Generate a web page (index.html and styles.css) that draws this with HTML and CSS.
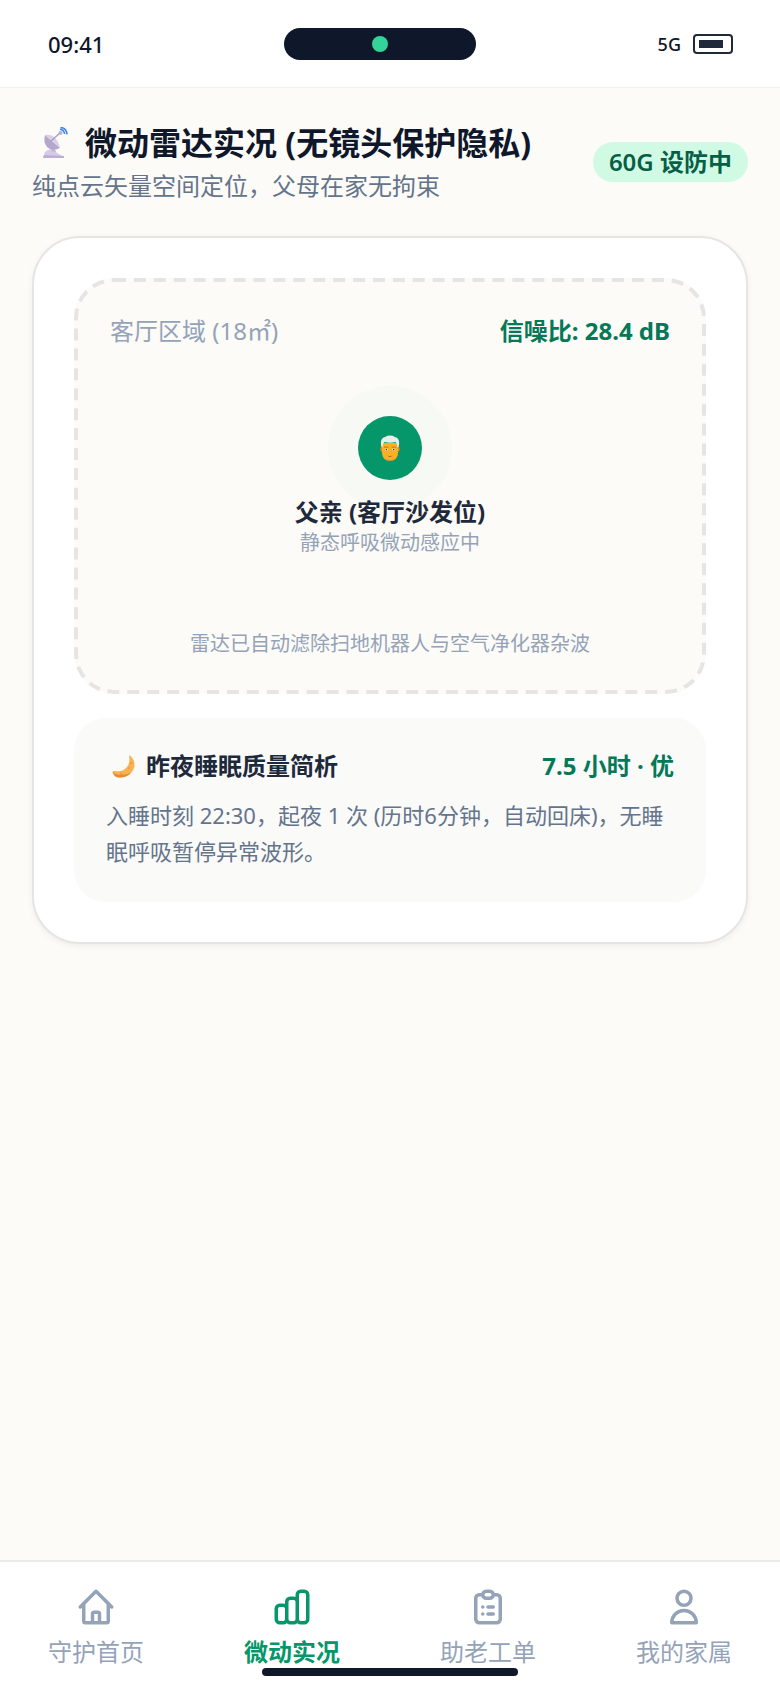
FILE: index.html
```html
<!DOCTYPE html>
<html lang="zh-CN">
<head>
  <meta charset="UTF-8">
  <meta name="viewport" content="width=device-width, initial-scale=1">
  <title>微动实况</title>
  <link rel="stylesheet" href="styles.css">
</head>
<body>
  <div class="app">

    <div class="status-bar">
      <span class="time">09:41</span>
      <div class="island"><span class="island-dot"></span></div>
      <div class="status-right">
        <span class="network">5G</span>
        <div class="battery"><span class="battery-fill"></span></div>
      </div>
    </div>

    <main class="content">
      <div class="page-head">
        <div class="head-text">
          <h1 class="page-title">
            <svg class="emoji-dish" viewBox="0 0 28 32">
              <path d="M3 31 L5 25 Q10 20 14 24 L24 30 Q25 31 23 31 Z" fill="#d6cbe6"/>
              <path d="M3 31 L4 28 L24 29 L24 31 Z" fill="#bdaed3"/>
              <path d="M10 20 L12 25 L16 25 L14 19 Z" fill="#c6b9da"/>
              <path d="M5 8 L20 21 Q12 25 7 20 Q3 15 5 8 Z" fill="#b5a6cc"/>
              <path d="M5 8 Q11 7 15 11 Q19 15 20 21 Z" fill="#d9cfe8"/>
              <path d="M11 14 L20 6" stroke="#a79ac0" stroke-width="1.4"/>
              <circle cx="20.5" cy="6" r="2" fill="#b8b3c6"/>
              <path d="M20 2.2 Q24 2.6 24.6 7 M20.5 0.4 Q26.5 0.8 27 7.4" fill="none" stroke="#3f83f0" stroke-width="1.5"/>
            </svg>
            <span>微动雷达实况 (无镜头保护隐私)</span>
          </h1>
          <p class="page-sub">纯点云矢量空间定位，父母在家无拘束</p>
        </div>
        <span class="badge">60G 设防中</span>
      </div>

      <section class="card">
        <div class="radar">
          <div class="radar-top">
            <span class="room">客厅区域 (18㎡)</span>
            <span class="snr">信噪比: 28.4 dB</span>
          </div>
          <div class="person">
            <div class="avatar">
              <svg class="emoji-man" viewBox="0 0 20 26">
                <rect x="0.3" y="11.5" width="19.4" height="5.5" rx="2.4" fill="#e8862a"/>
                <path d="M2 8 L18 8 L18 18 Q17.6 25.8 10 25.8 Q2.4 25.8 2 18 Z" fill="#fbb022"/>
                <path d="M5.5 23.5 Q10 26.4 14.5 23.5 L13 25.6 L7 25.6 Z" fill="#f0913c"/>
                <path d="M1.4 12 Q-0.6 3.5 5 2 Q10 -0.8 15 2 Q20.6 3.5 18.6 12 L17.4 12 Q17.6 8.5 15.4 7 Q10 8.6 4.6 7 Q2.4 8.5 2.6 12 Z" fill="#ececea"/>
                <rect x="4" y="11.6" width="4.4" height="1.1" fill="#d07a20"/>
                <rect x="11.6" y="11.6" width="4.4" height="1.1" fill="#d07a20"/>
                <ellipse cx="6.3" cy="14.6" rx="1.6" ry="1.1" fill="#fff"/>
                <ellipse cx="13.7" cy="14.6" rx="1.6" ry="1.1" fill="#fff"/>
                <circle cx="6.3" cy="14.6" r="0.8" fill="#3a2a20"/>
                <circle cx="13.7" cy="14.6" r="0.8" fill="#3a2a20"/>
                <path d="M7.4 20.6 Q10 21.6 12.6 20.6 Q10 23 7.4 20.6 Z" fill="#c2303a"/>
              </svg>
            </div>
            <strong class="person-name">父亲 (客厅沙发位)</strong>
            <span class="person-state">静态呼吸微动感应中</span>
          </div>
          <p class="radar-note">雷达已自动滤除扫地机器人与空气净化器杂波</p>
        </div>

        <div class="sleep">
          <div class="sleep-top">
            <div class="sleep-title">
              <svg class="emoji-moon" viewBox="0 0 24 23">
                <path d="M18 0.5 Q24 6 22 13 Q19 22 8 22.6 Q2 22.6 0.5 17 Q1 15.6 3 16 Q11 17.4 15 12 Q18.5 7.5 17 1.2 Q17.2 0.2 18 0.5 Z" fill="#f9b24f"/>
                <path d="M0.5 17 Q2 22.6 8 22.6 Q15 22.2 19 18 Q12 20.5 6 19.5 Q2.5 19 0.5 17 Z" fill="#e98a37"/>
                <circle cx="19" cy="8" r="1" fill="#e9963f"/>
                <circle cx="9" cy="19" r="1.1" fill="#e9963f"/>
                <circle cx="17" cy="13" r="0.8" fill="#e9963f"/>
              </svg>
              <strong>昨夜睡眠质量简析</strong>
            </div>
            <span class="sleep-score">7.5 小时 · 优</span>
          </div>
          <p class="sleep-desc">入睡时刻 22:30，起夜 1 次 (历时6分钟，自动回床)，无睡眠呼吸暂停异常波形。</p>
        </div>
      </section>
    </main>

    <nav class="tabbar">
      <a class="tab">
        <svg class="tab-icon" viewBox="0 0 24 24"><path d="M3 12l2-2m0 0l7-7 7 7M5 10v10a1 1 0 001 1h3m10-11l2 2m-2-2v10a1 1 0 01-1 1h-3m-6 0a1 1 0 001-1v-4a1 1 0 011-1h2a1 1 0 011 1v4a1 1 0 001 1m-6 0h6"/></svg>
        <span>守护首页</span>
      </a>
      <a class="tab active">
        <svg class="tab-icon" viewBox="0 0 24 24"><path d="M9 19v-6a2 2 0 00-2-2H5a2 2 0 00-2 2v6a2 2 0 002 2h2a2 2 0 002-2zm0 0V9a2 2 0 012-2h2a2 2 0 012 2v10m-6 0a2 2 0 002 2h2a2 2 0 002-2m0 0V5a2 2 0 012-2h2a2 2 0 012 2v14a2 2 0 01-2 2h-2a2 2 0 01-2-2z"/></svg>
        <span>微动实况</span>
      </a>
      <a class="tab">
        <svg class="tab-icon" viewBox="0 0 24 24"><path d="M9 5H7a2 2 0 00-2 2v12a2 2 0 002 2h10a2 2 0 002-2V7a2 2 0 00-2-2h-2M9 5a2 2 0 002 2h2a2 2 0 002-2M9 5a2 2 0 012-2h2a2 2 0 012 2m-3 7h3m-3 4h3m-6-4h.01M9 16h.01"/></svg>
        <span>助老工单</span>
      </a>
      <a class="tab">
        <svg class="tab-icon" viewBox="0 0 24 24"><path d="M16 7a4 4 0 11-8 0 4 4 0 018 0zM12 14a7 7 0 00-7 7h14a7 7 0 00-7-7z"/></svg>
        <span>我的家属</span>
      </a>
      <span class="home-bar"></span>
    </nav>

  </div>
</body>
</html>
```

FILE: styles.css
```css
* {
  box-sizing: border-box;
}

body {
  margin: 0;
  background-color: #fcfbf7;
  font-family: "Noto Sans", "Noto Sans CJK SC", sans-serif;
  color: #0f172a;
}

.app {
  display: flex;
  flex-direction: column;
  height: 1688px;
}

/* status bar */
.status-bar {
  display: flex;
  align-items: center;
  justify-content: space-between;
  height: 88px;
  padding: 0 47px 0 48px;
  background-color: #fff;
  border-bottom: 1px solid #f1f1ef;
  position: relative;
}

.time {
  font-size: 22px;
  font-weight: 500;
  line-height: 30px;
}

.island {
  position: absolute;
  left: 284px;
  top: 28px;
  display: flex;
  align-items: center;
  justify-content: center;
  width: 192px;
  height: 32px;
  border-radius: 16px;
  background-color: #0f172a;
}

.island-dot {
  width: 16px;
  height: 16px;
  border-radius: 50%;
  background-color: #34d399;
}

.status-right {
  display: flex;
  align-items: center;
  gap: 12px;
}

.network {
  font-size: 18px;
  font-weight: 500;
  line-height: 24px;
}

.battery {
  width: 40px;
  height: 20px;
  padding: 4px;
  border: 2px solid #1e293b;
  border-radius: 4px;
}

.battery-fill {
  display: block;
  width: 24px;
  height: 8px;
  background-color: #1e293b;
}

/* page */
.content {
  flex: 1;
  padding: 33px 32px 0;
}

.page-head {
  display: flex;
  align-items: center;
  justify-content: space-between;
}

.page-title {
  display: flex;
  align-items: center;
  gap: 17px;
  margin: 0 0 3px;
  padding-left: 8px;
  font-size: 32px;
  font-weight: 700;
  line-height: 44px;
}

.emoji-dish {
  width: 28px;
  height: 32px;
}

.page-sub {
  margin: 0;
  font-size: 24px;
  line-height: 36px;
  color: #64748b;
}

.badge {
  margin-top: -1px;
  padding: 0 16px;
  border-radius: 20px;
  background-color: #d1fae5;
  color: #065f46;
  font-size: 24px;
  font-weight: 600;
  line-height: 40px;
}

.card {
  margin-top: 32px;
  height: 708px;
  padding: 40px;
  border: 2px solid #e7e5e4;
  border-radius: 48px;
  background-color: #fff;
  box-shadow: 0 2px 6px rgba(0, 0, 0, 0.06);
}

.radar {
  position: relative;
  display: flex;
  flex-direction: column;
  height: 416px;
  padding: 35px 36px 0;
  border-radius: 40px;
  background-color: #fcfbf7;
}

/* drawn at half size and scaled up, this gives the long dash of a 2x screen */
.radar::before {
  content: "";
  position: absolute;
  left: 0;
  top: 0;
  box-sizing: border-box;
  width: 50%;
  height: 50%;
  border: 2px dashed #e7e5e4;
  border-radius: 20px;
  transform: scale(2);
  transform-origin: 0 0;
}

.radar-top {
  display: flex;
  justify-content: space-between;
  line-height: 36px;
  font-size: 24px;
}

.room {
  color: #94a3b8;
}

.snr {
  font-weight: 700;
  color: #047857;
}

.person {
  display: flex;
  flex-direction: column;
  align-items: center;
  margin-top: 37px;
}

.avatar {
  display: flex;
  align-items: center;
  justify-content: center;
  width: 64px;
  height: 64px;
  margin: 30px 0 18px;
  border-radius: 50%;
  background-color: #059669;
  box-shadow: 0 0 0 30px rgba(5, 150, 105, 0.02);
}

.emoji-man {
  width: 20px;
  height: 26px;
}

.person-name {
  margin-bottom: 3px;
  font-size: 24px;
  font-weight: 700;
  line-height: 28px;
  color: #1e293b;
}

.person-state {
  font-size: 20px;
  line-height: 28px;
  color: #94a3b8;
}

.radar-note {
  margin: 73px 0 0;
  text-align: center;
  font-size: 20px;
  line-height: 28px;
  color: #94a3b8;
}

.sleep {
  height: 184px;
  margin-top: 24px;
  padding: 30px 32px;
  border-radius: 32px;
  background-color: #fafaf9;
}

.sleep-top {
  display: flex;
  align-items: center;
  justify-content: space-between;
  line-height: 36px;
}

.sleep-title {
  display: flex;
  align-items: center;
  gap: 10px;
  padding-left: 6px;
  font-size: 24px;
  color: #1e293b;
}

.emoji-moon {
  width: 24px;
  height: 23px;
}

.sleep-score {
  font-size: 24px;
  font-weight: 700;
  color: #047857;
}

.sleep-desc {
  margin: 13px 0 0;
  font-size: 22px;
  line-height: 36px;
  color: #64748b;
}

/* bottom tabs */
.tabbar {
  position: relative;
  display: flex;
  justify-content: space-between;
  height: 128px;
  padding: 24px 48px 0;
  background-color: #fff;
  border-top: 2px solid #ecebe8;
}

.tab {
  display: flex;
  flex-direction: column;
  align-items: center;
  font-size: 24px;
  line-height: 34px;
  color: #94a3b8;
}

.tab.active {
  font-weight: 700;
  color: #059669;
}

.tab-icon {
  width: 42px;
  height: 42px;
  margin-bottom: 7px;
  fill: none;
  stroke: currentColor;
  stroke-width: 2;
  stroke-linecap: round;
  stroke-linejoin: round;
}

.home-bar {
  position: absolute;
  left: 262px;
  bottom: 12px;
  width: 256px;
  height: 8px;
  border-radius: 4px;
  background-color: #0f172a;
}
```
